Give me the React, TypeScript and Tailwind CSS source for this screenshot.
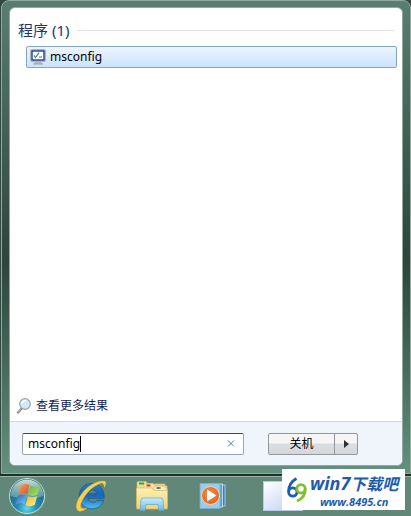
import { useState } from "react";

interface IProgram {
  name: string;
}

const programs: IProgram[] = [{ name: "msconfig" }];

function ProgramIcon() {
  return (
    <svg width="16" height="16" viewBox="0 0 16 16" aria-hidden="true">
      <path d="M5 12h6l1 3H4z" fill="#b9b9b5" />
      <path d="M3 15h10" stroke="#9e9e9a" strokeWidth="1" />
      <rect x="0.5" y="0.5" width="15" height="12" rx="1" fill="#d6d6d0" stroke="#b4b4ae" />
      <rect x="2" y="2" width="12" height="9" fill="#fff" stroke="#1f3c94" strokeWidth="1.4" />
      <path d="M4 6.500l1.600 2L9 3.600" fill="none" stroke="#2f9a9c" strokeWidth="1.300" />
      <path d="M9 8h3" stroke="#5268a8" strokeWidth="1" />
    </svg>
  );
}

function SearchIcon() {
  return (
    <svg width="16" height="18" viewBox="0 0 16 18" aria-hidden="true">
      <path d="M5.500 11.500L2 15.500" stroke="#8a8078" strokeWidth="2.200" strokeLinecap="round" />
      <path d="M5 11.600L2.200 14.800" stroke="#d8d2cc" strokeWidth="0.800" strokeLinecap="round" />
      <circle cx="9" cy="7" r="5.300" fill="#cfe8f7" stroke="#9aa4ae" strokeWidth="1.200" />
      <path d="M5.900 6.600a3.400 3.400 0 0 1 4-3" fill="none" stroke="#fff" strokeWidth="1.400" />
    </svg>
  );
}

function StartOrb() {
  return (
    <svg width="40" height="40" viewBox="0 0 40 40" aria-hidden="true">
      <defs>
        <radialGradient id="orb" cx="50%" cy="85%" r="75%">
          <stop offset="0" stopColor="#5fdcea" />
          <stop offset="0.35" stopColor="#2490b4" />
          <stop offset="1" stopColor="#1f5c70" />
        </radialGradient>
        <linearGradient id="gloss" x1="0" y1="0" x2="0" y2="1">
          <stop offset="0" stopColor="#e8f4ee" stopOpacity="0.85" />
          <stop offset="1" stopColor="#a9d0c4" stopOpacity="0.35" />
        </linearGradient>
        <radialGradient id="halo">
          <stop offset="0.7" stopColor="#8fe39b" stopOpacity="0.5" />
          <stop offset="1" stopColor="#8fe39b" stopOpacity="0" />
        </radialGradient>
        <linearGradient id="flagRed" x1="0" y1="0" x2="1" y2="1">
          <stop offset="0" stopColor="#f7a562" />
          <stop offset="1" stopColor="#dc4a1e" />
        </linearGradient>
        <linearGradient id="flagGreen" x1="0" y1="0" x2="1" y2="1">
          <stop offset="0" stopColor="#62b83a" />
          <stop offset="1" stopColor="#b4e06a" />
        </linearGradient>
        <linearGradient id="flagBlue" x1="0" y1="0" x2="1" y2="1">
          <stop offset="0" stopColor="#2a62b8" />
          <stop offset="1" stopColor="#7cc6f4" />
        </linearGradient>
        <linearGradient id="flagYellow" x1="0" y1="0" x2="1" y2="1">
          <stop offset="0" stopColor="#f6b124" />
          <stop offset="1" stopColor="#fff3a0" />
        </linearGradient>
      </defs>
      <circle cx="21" cy="20" r="19" fill="url(#halo)" />
      <circle cx="20" cy="20" r="17.500" fill="url(#orb)" stroke="#c5e0dc" strokeWidth="1" />
      <path d="M3.500 20a16.500 16.500 0 0 1 33 0q-16.500 6-33 0z" fill="url(#gloss)" />
      <path d="M13.500 9.500q4.500-3 9-.4l-2.300 9q-4.500-2.400-9 .6z" fill="url(#flagRed)" />
      <path d="M23.500 9.800q4.500 2.600 9.300-.2l-2.400 9q-4.500 2.500-9.200.2z" fill="url(#flagGreen)" />
      <path d="M10.900 19.800q4.500-3 9-.6l-2.300 9q-4.500-2.600-9 .4z" fill="url(#flagBlue)" />
      <path d="M21 20q4.500 2.600 9.200 0l-2.400 8.800q-4.700 2.700-9.200.2z" fill="url(#flagYellow)" />
    </svg>
  );
}

function ExplorerIcon() {
  return (
    <svg width="32" height="32" viewBox="0 0 34 34" aria-hidden="true">
      <defs>
        <linearGradient id="ieBlue" x1="0" y1="0" x2="0" y2="1">
          <stop offset="0" stopColor="#2a78c4" />
          <stop offset="0.5" stopColor="#1767b8" />
          <stop offset="1" stopColor="#4cc0f4" />
        </linearGradient>
      </defs>
      <path
        fillRule="evenodd"
        d="M18 3.500C26 3.500 31.500 10 31 19.500H14c.4 2.800 2.300 4.200 5 4.200 2 0 3.500-.8 4.300-2.200h7.200C28.500 27.500 24 30.500 18 30.500 10.500 30.500 4.500 25 4.500 17S10.500 3.500 18 3.500zM14 14.500h8.800c-.4-2.400-2-3.800-4.400-3.800s-4 1.400-4.400 3.800z"
        fill="url(#ieBlue)"
        stroke="#0e4a8c"
        strokeWidth="0.6"
      />
      <path
        d="M32 1.500C25-.5 13 6 6.500 15.500 1 23.500-.5 31 4 33c2.500.8 6-.7 9-3.500-3.800 1.500-6.300 1-6.800-.9C5.200 24.500 10 16.500 16 10.500 22 5 28.500 3 32 1.500z"
        fill="#f6d24c"
        stroke="#d3a526"
        strokeWidth="0.5"
      />
      <path d="M25 3q6-3 7.500-.8 1 2-1.500 6 .2-3.800-1.500-4.600-1.500-.7-4.500-.6z" fill="#f2cc44" />
    </svg>
  );
}

function FolderIcon() {
  return (
    <svg width="34" height="32" viewBox="0 0 34 32" aria-hidden="true">
      <defs>
        <linearGradient id="folder" x1="0" y1="0" x2="0" y2="1">
          <stop offset="0" stopColor="#fdf1b4" />
          <stop offset="1" stopColor="#efd27c" />
        </linearGradient>
        <linearGradient id="stand" x1="0" y1="0" x2="0" y2="1">
          <stop offset="0" stopColor="#c9edfb" />
          <stop offset="1" stopColor="#6ab8e2" />
        </linearGradient>
      </defs>
      <path d="M2 3q0-1.500 1.500-1.500H11L13 4h17v22H2z" fill="#f3dc8c" stroke="#d8bc6c" strokeWidth="0.700" />
      <rect x="4" y="2.500" width="5" height="2" fill="#3a9a4c" />
      <path d="M9 5q0-1.500 1.500-1.500H18L20 6h12v20H9z" fill="#f8e6a2" stroke="#d8bc6c" strokeWidth="0.700" />
      <rect x="11.500" y="4.500" width="4" height="2" fill="#b8463a" />
      <path d="M19 7.500q0-1.500 1.500-1.500H29l1.500 2H32v19H19z" fill="#fbedb4" stroke="#d8bc6c" strokeWidth="0.700" />
      <rect x="21.500" y="7" width="4" height="2" fill="#3d86c4" />
      <path d="M1.500 8H17l2 2.500h13.500V28q0 1-1 1h-29q-1 0-1-1z" fill="url(#folder)" stroke="#d8b45c" strokeWidth="0.700" />
      <path d="M5 30.500l1-10.500q.2-2 2-2h18q1.800 0 2 2l1 10.500h-5l-1-6H11l-1 6z" fill="url(#stand)" stroke="#5ca6d0" strokeWidth="0.700" />
    </svg>
  );
}

function MediaPlayerIcon() {
  return (
    <svg width="28" height="28" viewBox="0 0 28 28" aria-hidden="true">
      <defs>
        <radialGradient id="player" cx="45%" cy="40%" r="60%">
          <stop offset="0" stopColor="#f4924a" />
          <stop offset="1" stopColor="#dc6420" />
        </radialGradient>
      </defs>
      <rect x="8" y="3" width="18" height="21" fill="#3d7fb4" stroke="#b6dcf0" strokeWidth="0.800" />
      <rect x="5" y="2" width="18.500" height="23" fill="#5da3d0" stroke="#cdeaf8" strokeWidth="0.800" />
      <rect x="1" y="1.500" width="20" height="25" fill="#9ccbe8" stroke="#76aed4" strokeWidth="0.800" />
      <circle cx="11.500" cy="13.500" r="9" fill="url(#player)" stroke="#f8d3b2" strokeWidth="1" />
      <path d="M8 7.500l9.500 6-9.500 6z" fill="#fff" />
    </svg>
  );
}

function SiteLogo() {
  return (
    <svg width="22" height="28" viewBox="0 0 22 28" aria-hidden="true">
      <path d="M10.500 2.500C6 5 2.600 10 2.600 15.500" fill="none" stroke="#1f5cb0" strokeWidth="2.800" />
      <circle cx="6.800" cy="16" r="4.200" fill="none" stroke="#1f5cb0" strokeWidth="2.800" />
      <circle cx="15" cy="12.800" r="4.200" fill="none" stroke="#84c02c" strokeWidth="2.800" />
      <path d="M19.200 12.800c.4 5.200-2.700 9.700-8.200 12.200" fill="none" stroke="#84c02c" strokeWidth="2.800" />
    </svg>
  );
}

function Taskbar() {
  return (
    <nav className="relative flex h-[42px] shrink-0 items-center border-t-2 border-[#1d3129] bg-[#618778] shadow-[inset_0_1px_0_#9db5a8]">
      <button type="button" aria-label="开始" className="ml-[7px]">
        <StartOrb />
      </button>
      <button type="button" aria-label="Internet Explorer" className="ml-7">
        <ExplorerIcon />
      </button>
      <button type="button" aria-label="Windows 资源管理器" className="ml-7">
        <FolderIcon />
      </button>
      <button type="button" aria-label="Windows Media Player" className="ml-[30px]">
        <MediaPlayerIcon />
      </button>
      <button
        type="button"
        aria-label="任务"
        className="ml-9 h-[30px] w-10 border border-[#b9c9e6] bg-linear-to-br from-white to-[#b9cdf0]"
      />
      <a
        href="#site"
        className="absolute -top-[7px] right-1.5 flex h-[41px] w-[123px] items-center gap-0.5 bg-white pl-1 text-[#1c5cae]"
      >
        <SiteLogo />
        <span className="flex flex-col items-center font-bold whitespace-nowrap italic">
          <span className="text-[18px] leading-[22px]">
            win7<span className="text-base">下载吧</span>
          </span>
          <span className="font-['Open_Sans'] text-[11px] leading-3">www.8495.cn</span>
        </span>
      </a>
    </nav>
  );
}

export default function App() {
  const [query, setQuery] = useState<string>("msconfig");

  return (
    <div className="flex min-h-screen flex-col bg-[#31473f] font-['Noto_Sans','Noto_Sans_CJK_SC',sans-serif] text-xs text-black">
      <main className="ml-px flex flex-1 flex-col rounded-t-lg border border-[#91aaa0] bg-linear-to-b from-[#5b7d71] via-[#2d453c] via-55% to-[#64917f] px-[7px] pt-1.5 pb-[7px]">
        <div className="flex flex-1 flex-col overflow-hidden rounded-md border border-[#91a9a1] bg-white">
          {/* search results */}
          <section className="flex flex-1 flex-col pt-2.5">
            <h2 className="flex items-center gap-2 px-2 text-[15px] leading-6 text-[#26336f]">
              程序 (1)
              <span className="h-px flex-1 bg-[#dfe3e8]" />
            </h2>
            <ul className="mt-1 pr-[5px] pl-4">
              {programs.map((program) => (
                <li key={program.name}>
                  <button
                    type="button"
                    className="flex h-[22px] w-full items-center gap-1 rounded-xs border border-[#84a6c4] bg-linear-to-b from-[#eef5fe] to-[#cbe2fd] px-[3px]"
                  >
                    <ProgramIcon />
                    {program.name}
                  </button>
                </li>
              ))}
            </ul>
            <a href="#more" className="mt-auto mb-1.5 flex items-center gap-1 pl-1.5 text-[#151c55]">
              <SearchIcon />
              查看更多结果
            </a>
          </section>

          {/* search box and shut down */}
          <footer className="flex h-11 items-center border-t border-[#ccd8e4] bg-[#f0f4fb] pl-3">
            <label className="flex h-[22px] w-[222px] items-center rounded-xs border border-[#98a6b2] border-t-[#3f4b50] bg-white pr-[3px] pl-[5px]">
              <input
                aria-label="搜索程序和文件"
                value={query}
                onChange={(e) => setQuery(e.target.value)}
                className="field-sizing-content caret-transparent outline-none"
              />
              <span className="h-4 w-px bg-black" />
              <button type="button" aria-label="清除" onClick={() => setQuery("")} className="ml-auto p-1">
                <svg width="9" height="9" viewBox="0 0 9 9" aria-hidden="true">
                  <path d="M1 1.500l6 6M7 1.500l-6 6" stroke="#4c86a8" strokeWidth="1" />
                </svg>
              </button>
            </label>
            <div className="ml-6 flex h-[22px] w-[90px] rounded-xs border border-[#92979d] bg-linear-to-b from-[#f5f5f6] from-45% via-[#dcdde0] via-50% to-[#d5d7db]">
              <button type="button" className="flex-1">
                关机
              </button>
              <button
                type="button"
                aria-label="更多关机选项"
                className="flex w-[23px] items-center justify-center border-l border-[#92979d]"
              >
                <svg width="5" height="8" viewBox="0 0 5 8" aria-hidden="true">
                  <path d="M0 0l5 4-5 4z" fill="#2b2f36" />
                </svg>
              </button>
            </div>
          </footer>
        </div>
      </main>
      <Taskbar />
    </div>
  );
}
